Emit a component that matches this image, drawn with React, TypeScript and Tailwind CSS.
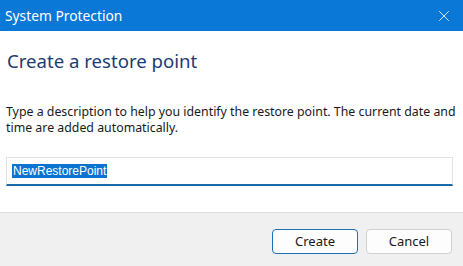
import { X } from 'lucide-react';

const App = () => {
  return (
    <div
      className="w-[463px] h-[266px] bg-white flex flex-col overflow-hidden"
      style={{ fontFamily: '"Noto Sans", "Open Sans", sans-serif' }}
    >
      {/* Title bar */}
      <div className="h-[31px] bg-[#0a78d7] flex items-center justify-between pl-[5px] pr-[10px] shrink-0">
        <span className="text-[13.8px] text-white leading-none">System Protection</span>
        <X className="w-[18px] h-[18px] text-white" strokeWidth={1.1} />
      </div>

      {/* Body */}
      <div className="flex-1 flex flex-col px-[6px]">
        <h1 className="mt-[17px] text-[18.6px] leading-[26px] text-[#1e3b70] pl-px">Create a restore point</h1>
        <p className="mt-[30px] text-[12.35px] leading-[16px] text-[#1a1a1a]">
          Type a description to help you identify the restore point. The current date and time are added automatically.
        </p>
        <div className="mt-[21px] h-[29px] border border-[#e3e3e3] border-b-2 border-b-[#1a69a8] flex items-center pl-[5px] w-[447px]">
          <span
            className="bg-[#0a74d0] text-white text-[12px] leading-[14px] px-px"
            style={{ fontFamily: '"Liberation Sans", Arial, sans-serif' }}
          >
            NewRestorePoint
          </span>
        </div>
      </div>

      {/* Footer */}
      <div className="h-[54px] shrink-0 bg-[#f0f0f0] border-t border-[#dcdcdc] flex items-start justify-end gap-[8px] pt-[16px] pr-[11px]">
        <button className="w-[86px] h-[25px] rounded-[4px] border border-[#1f6fb5] bg-[#fdfdfd] text-[13px] text-[#1a1a1a]">
          Create
        </button>
        <button className="w-[86px] h-[25px] rounded-[4px] border border-[#d0d0d0] bg-[#fdfdfd] text-[13px] text-[#1a1a1a]">
          Cancel
        </button>
      </div>
    </div>
  );
};

export default App;
